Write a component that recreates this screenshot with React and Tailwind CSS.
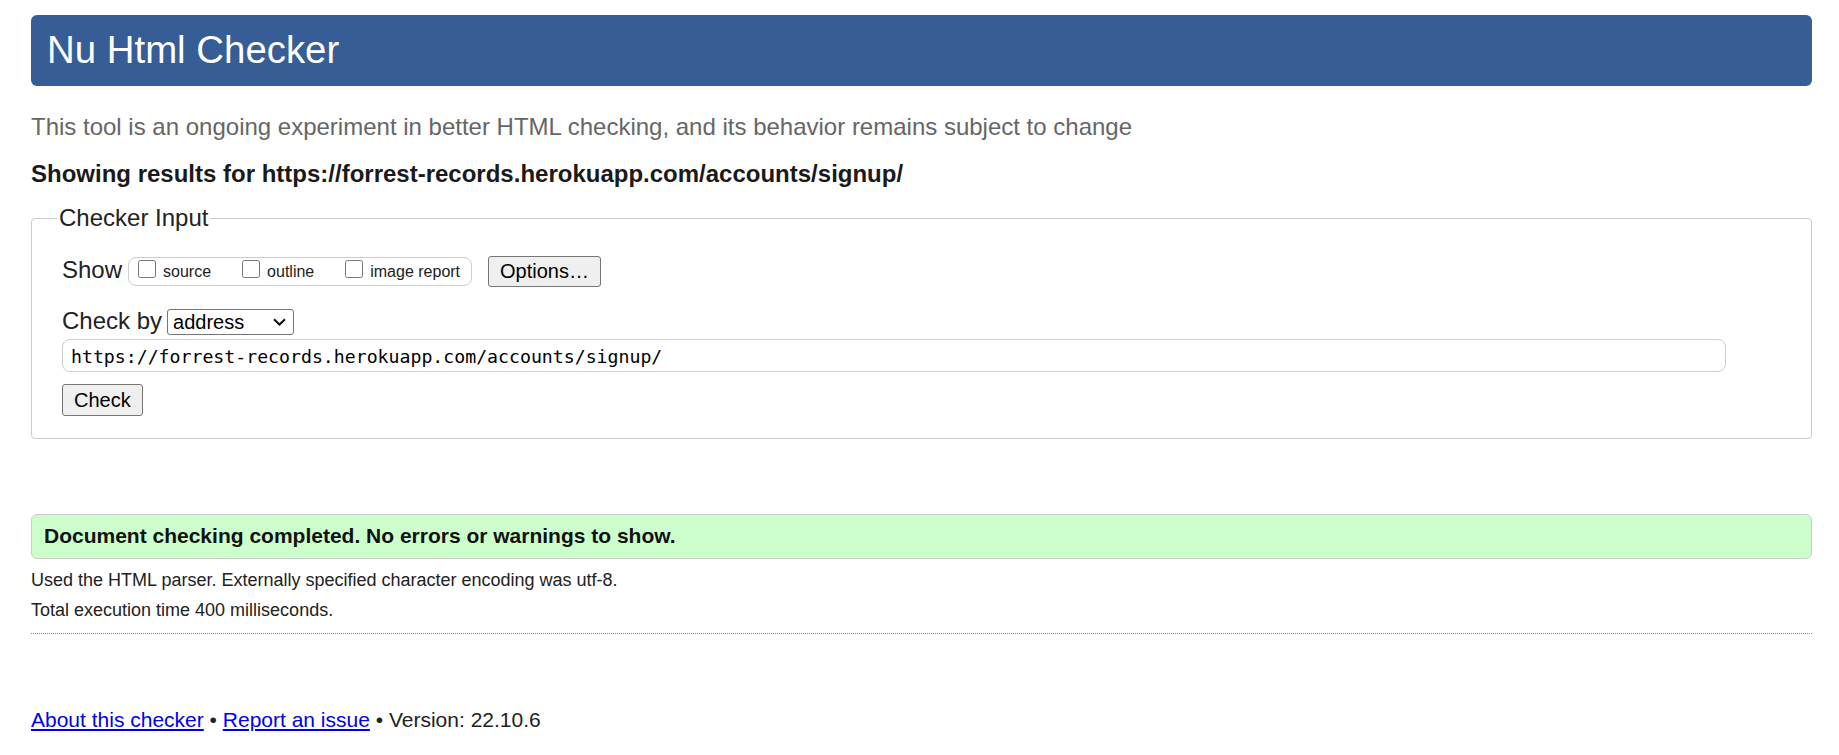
import React from "react"

const CheckOption = ({ label, first }) => (
    <label className={`flex items-start ${first ? "" : "ml-[31px]"}`}>
        <input type="checkbox" className="m-0 mt-[2px] w-[18px] h-[18px]" />
        <span className="ml-[7px] mt-[6px] text-[16px] leading-[16px]">{label}</span>
    </label>
)

const App = () => {
    return (
        <div className="min-h-screen bg-white pl-[31px] pr-[27px] pt-[15px] font-['Liberation_Sans',Arial,sans-serif] text-[#222]">
            {/* Title bar */}
            <header className="h-[71px] rounded-[6px] bg-[#365d95] flex items-center pl-[16px]">
                <h1 className="text-[38.4px] leading-none font-normal text-white">Nu Html Checker</h1>
            </header>

            <p className="mt-[27px] text-[24px] leading-[28px] text-[#666]">
                This tool is an ongoing experiment in better HTML checking, and its behavior remains subject to change
            </p>

            <h2 className="mt-[19px] text-[24px] leading-[28px] font-bold text-[#1a1a1a]">
                Showing results for https://forrest-records.herokuapp.com/accounts/signup/
            </h2>

            {/* Checker input form */}
            <fieldset className="mt-[16px] border border-[#ccc] rounded-[4px] pl-[30px] pt-[22.6px] pb-[22px]">
                <legend className="-ml-[5px] px-[2px] text-[24px] leading-[28px]">Checker Input</legend>

                <div className="flex items-start">
                    <span className="mt-[1.5px] text-[24px] leading-[28px]">Show</span>
                    <div className="ml-[6px] mt-[2px] h-[29px] border border-[#ccc] rounded-[8px] flex items-start pl-[9px] pr-[11px]">
                        <CheckOption label="source" first />
                        <CheckOption label="outline" />
                        <CheckOption label="image report" />
                    </div>
                    <button className="ml-[16px] mt-[1px] h-[31px] px-[11px] border border-[#767676] rounded-[3px] bg-[#efefef] text-[20px] leading-[29px] text-black">
                        Options…
                    </button>
                </div>

                <div className="mt-[20px] flex items-start">
                    <span className="text-[24px] leading-[28px]">Check by</span>
                    <div className="ml-[5px] mt-[2px] h-[26px] w-[127px] border border-[#767676] rounded-[3px] flex items-center justify-between pl-[5px] pr-[7px] text-[20px] leading-[24px] text-black">
                        <span>address</span>
                        <svg width="13" height="8" viewBox="0 0 13 8" fill="none" stroke="#111" strokeWidth="2">
                            <path d="M1 1.2 L6.5 6.5 L12 1.2" />
                        </svg>
                    </div>
                </div>

                <div className="mt-[4px] h-[33px] w-[1664px] border border-[#ccc] rounded-[8px] pl-[8px] pt-[4px] font-['DejaVu_Sans_Mono',monospace] text-[18.2px] leading-[26px] text-black">
                    https://forrest-records.herokuapp.com/accounts/signup/
                </div>

                <button className="mt-[12px] block h-[32px] px-[11px] border border-[#767676] rounded-[3px] bg-[#efefef] text-[20px] leading-[30px] text-black">
                    Check
                </button>
            </fieldset>

            {/* Result */}
            <div className="mt-[75px] h-[45px] border border-[#ccc] rounded-[6px] bg-[#ccffcc] pl-[12px] flex items-center">
                <p className="text-[21px] font-bold text-[#111]">Document checking completed. No errors or warnings to show.</p>
            </div>

            <p className="mt-[6px] text-[18px] leading-[30.5px]">Used the HTML parser. Externally specified character encoding was utf-8.</p>
            <p className="text-[18px] leading-[30.5px]">Total execution time 400 milliseconds.</p>

            <hr className="mt-[7px] border-0 border-t border-dotted border-[#888]" />

            {/* Footer */}
            <p className="mt-[74px] text-[21px] leading-[24px]">
                <a href="#" className="text-[#0000ee] underline">About this checker</a>
                {" • "}
                <a href="#" className="text-[#0000ee] underline">Report an issue</a>
                {" • Version: 22.10.6"}
            </p>
        </div>
    )
}

export default App
